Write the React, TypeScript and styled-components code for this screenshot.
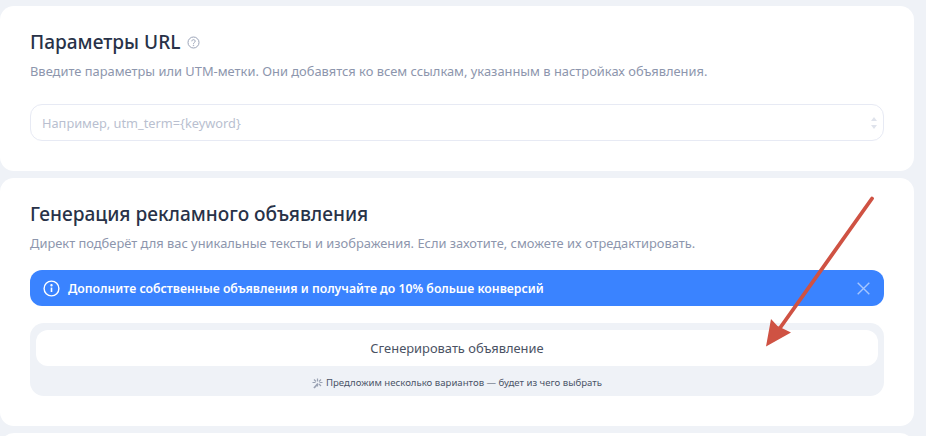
import React from "react";
import styled, { createGlobalStyle } from "styled-components";

const Global = createGlobalStyle`
  html, body {
    margin: 0;
    padding: 0;
    background: #eff2f7;
  }
  body {
    font-family: "Noto Sans", "Open Sans", sans-serif;
  }
`;

const Page = styled.div`
  position: relative;
  width: 926px;
  height: 436px;
  overflow: hidden;
  padding: 6px 12px 0 0;
  box-sizing: border-box;
  display: flex;
  flex-direction: column;
  gap: 7px;
`;

const Card = styled.section<{ $height: number; $top: number }>`
  background: #fff;
  border-radius: 14px;
  height: ${(p) => p.$height}px;
  flex: none;
  box-sizing: border-box;
  padding: ${(p) => p.$top}px 30px 0;
`;

const Title = styled.h2`
  margin: 0;
  display: flex;
  align-items: center;
  gap: 7px;
  font-size: 19.1px;
  line-height: 24px;
  font-weight: 500;
  color: #283248;
`;

const Hint = styled.p`
  margin: 9px 0 0;
  font-size: 12.88px;
  line-height: 17px;
  color: #8d96ad;
`;

const InputBox = styled.div`
  margin-top: 24px;
  height: 37px;
  box-sizing: border-box;
  border: 1px solid #e7eaf4;
  border-radius: 12px;
  display: flex;
  align-items: center;
  justify-content: space-between;
  padding: 0 5px 0 11px;
  font-size: 12.8px;
  color: #b9bfd0;
`;

const Alert = styled.div`
  margin-top: 18px;
  height: 36px;
  background: #3a83ff;
  border-radius: 12px;
  display: flex;
  align-items: center;
  gap: 8px;
  padding: 0 14px 0 13px;
  color: #fff;
  font-size: 12.25px;
  font-weight: 600;
`;

const AlertText = styled.span`
  flex: 1;
`;

const GenerateBox = styled.div`
  margin-top: 17px;
  height: 73px;
  box-sizing: border-box;
  background: #eff2f7;
  border-radius: 14px;
  padding: 7px 6px 0;
  display: flex;
  flex-direction: column;
  align-items: stretch;
`;

const GenerateButton = styled.button`
  height: 36px;
  border: 0;
  background: #fff;
  border-radius: 12px;
  font: inherit;
  font-size: 12.9px;
  color: #4a5263;
  padding: 0;
`;

const Note = styled.div`
  margin-top: 10px;
  display: flex;
  justify-content: center;
  align-items: center;
  gap: 3px;
  font-size: 9.6px;
  line-height: 14px;
  color: #4b5468;
`;

const Arrow = styled.svg`
  position: absolute;
  left: 0;
  top: 0;
  pointer-events: none;
`;

const HelpIcon = () => (
  <svg width="13" height="13" viewBox="0 0 13 13" fill="none" stroke="#9aa3b8" strokeWidth="1">
    <circle cx="6.5" cy="6.5" r="5.5" />
    <path d="M4.8 5.3c0-1 .8-1.6 1.7-1.6s1.7.6 1.7 1.5c0 1.3-1.7 1.2-1.7 2.6" />
    <circle cx="6.5" cy="9.4" r=".3" />
  </svg>
);

const Stepper = () => (
  <svg width="8" height="16" viewBox="0 0 8 16" fill="#dfe3ec">
    <path d="M4 2l3 4H1z" />
    <path d="M4 14l3-4H1z" />
  </svg>
);

const InfoIcon = () => (
  <svg width="17" height="17" viewBox="0 0 17 17" fill="none" stroke="#fff" strokeWidth="1.4">
    <circle cx="8.5" cy="8.5" r="7.4" />
    <path d="M8.5 7.6v4.4" strokeWidth="1.6" />
    <circle cx="8.5" cy="5.2" r=".5" fill="#fff" />
  </svg>
);

const CloseIcon = () => (
  <svg width="13" height="13" viewBox="0 0 13 13" stroke="#a5c6ff" strokeWidth="1.4" fill="none">
    <path d="M.7.7l11.6 11.6M12.3.7L.7 12.3" />
  </svg>
);

const WandIcon = () => (
  <svg width="11" height="11" viewBox="0 0 11 11" stroke="#9aa2b3" strokeWidth="1.2" fill="none">
    <path d="M2 10l4-4.5" strokeWidth="1.8" />
    <path d="M5.5.5v3M5.500 6.500v2M7.500 4.500h3M.5 4.500h3M9 1.500L7 3.500M2 1.500l2 2M7 6l2 2" />
  </svg>
);

export default function App() {
  return (
    <Page>
      <Global />
      <Card $height={165} $top={24}>
        <Title>
          Параметры URL <HelpIcon />
        </Title>
        <Hint>Введите параметры или UTM-метки. Они добавятся ко всем ссылкам, указанным в настройках объявления.</Hint>
        <InputBox>
          Например, utm_term={"{keyword}"}
          <Stepper />
        </InputBox>
      </Card>
      <Card $height={248} $top={24}>
        <Title>Генерация рекламного объявления</Title>
        <Hint>Директ подберёт для вас уникальные тексты и изображения. Если захотите, сможете их отредактировать.</Hint>
        <Alert>
          <InfoIcon />
          <AlertText>Дополните собственные объявления и получайте до 10% больше конверсий</AlertText>
          <CloseIcon />
        </Alert>
        <GenerateBox>
          <GenerateButton>Сгенерировать объявление</GenerateButton>
          <Note>
            <WandIcon />
            Предложим несколько вариантов — будет из чего выбрать
          </Note>
        </GenerateBox>
      </Card>
      <Card $height={40} $top={0} />
      <Arrow width="926" height="436" viewBox="0 0 926 436">
        <path d="M872 198.500L780 328" stroke="#cf5243" strokeWidth="3.800" strokeLinecap="round" fill="none" />
        <path d="M766 346.500L771 319 777.500 326 791 332.500z" fill="#cf5243" />
      </Arrow>
    </Page>
  );
}
